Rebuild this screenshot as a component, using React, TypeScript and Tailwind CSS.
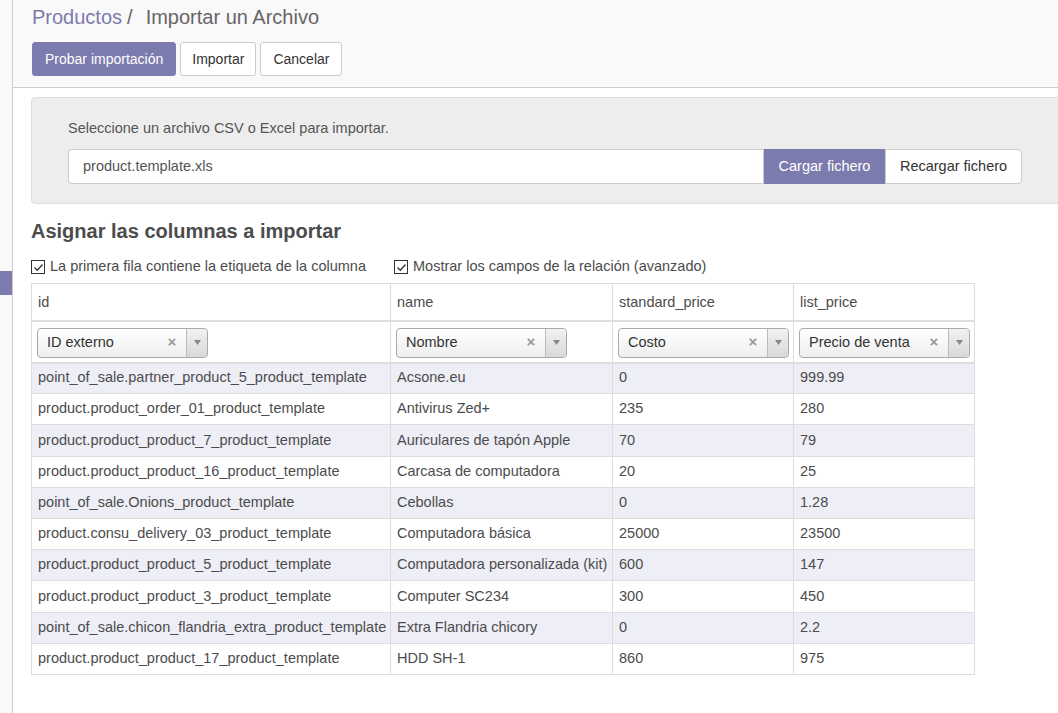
const rows = [
  ["point_of_sale.partner_product_5_product_template", "Acsone.eu", "0", "999.99"],
  ["product.product_order_01_product_template", "Antivirus Zed+", "235", "280"],
  ["product.product_product_7_product_template", "Auriculares de tapón Apple", "70", "79"],
  ["product.product_product_16_product_template", "Carcasa de computadora", "20", "25"],
  ["point_of_sale.Onions_product_template", "Cebollas", "0", "1.28"],
  ["product.consu_delivery_03_product_template", "Computadora básica", "25000", "23500"],
  ["product.product_product_5_product_template", "Computadora personalizada (kit)", "600", "147"],
  ["product.product_product_3_product_template", "Computer SC234", "300", "450"],
  ["point_of_sale.chicon_flandria_extra_product_template", "Extra Flandria chicory", "0", "2.2"],
  ["product.product_product_17_product_template", "HDD SH-1", "860", "975"],
];

const columns = [
  { name: "id", field: "ID externo", width: "w-[359px]" },
  { name: "name", field: "Nombre", width: "w-[222px]" },
  { name: "standard_price", field: "Costo", width: "w-[181px]" },
  { name: "list_price", field: "Precio de venta", width: "w-[181px]" },
];

function Checkbox() {
  return (
    <span className="w-[14px] h-[14px] border border-[#333] bg-white flex items-center justify-center shrink-0">
      <svg width="11" height="11" viewBox="0 0 11 11">
        <path d="M1.5 5.5 L4.3 8.3 L9.5 2.5" fill="none" stroke="#333" strokeWidth="1.3" />
      </svg>
    </span>
  );
}

function FieldSelect({ label }: { label: string }) {
  return (
    <div className="w-[171px] h-[30px] flex items-stretch rounded-[4px] border border-[#aaa] bg-gradient-to-b from-white to-[#eee] text-[#333]">
      <span className="flex-1 pl-[9px] flex items-center truncate">{label}</span>
      <span className="w-[28px] flex items-center justify-center text-[#999] text-[15px] font-bold">×</span>
      <span className="w-[21px] border-l border-[#bbb] flex items-center justify-center bg-gradient-to-b from-[#f2f2f2] to-[#d8d8d8] rounded-r-[4px]">
        <svg width="7" height="5" viewBox="0 0 7 5">
          <path d="M0 0 L7 0 L3.5 5 Z" fill="#888" />
        </svg>
      </span>
    </div>
  );
}

export default function App() {
  return (
    <div className="flex w-[1058px] h-[713px] overflow-hidden bg-white text-[14.5px] text-[#4c4c4c] font-['Liberation_Sans',Arial,sans-serif]">
      {/* Sidebar */}
      <div className="w-[13px] shrink-0 bg-[#f9f9f9] border-r border-[#ccc] pt-[271px]">
        <div className="h-[24px] bg-[#7c7bad]" />
      </div>

      <div className="flex-1 min-w-0 overflow-hidden">
        {/* Control panel */}
        <div className="h-[88px] bg-[#f9f9f9] border-b border-[#ccc] pl-[19px] pt-[5px]">
          <div className="text-[20px] leading-[24px] flex">
            <span className="text-[#7c7bad]">Productos</span>
            <span className="text-[#666] ml-[5px]">/</span>
            <span className="text-[#666] ml-[13px]">Importar un Archivo</span>
          </div>
          <div className="flex gap-[4px] mt-[13px] text-[14px]">
            <button className="h-[34px] px-[12px] rounded-[3px] bg-[#7c7bad] border border-[#7c7bad] text-white">Probar importación</button>
            <button className="h-[34px] px-[11px] rounded-[3px] bg-white border border-[#ccc] text-[#333]">Importar</button>
            <button className="h-[34px] px-[12px] rounded-[3px] bg-white border border-[#ccc] text-[#333]">Cancelar</button>
          </div>
        </div>

        <div className="pl-[18px] pt-[9px]">
          {/* File panel */}
          <div className="w-[1060px] h-[107px] bg-[#eeeded] border border-[#ddd] rounded-[4px] pl-[36px] pt-[20px]">
            <div className="text-[#555] leading-[20px]">Seleccione un archivo CSV o Excel para importar.</div>
            <div className="flex mt-[11px]">
              <div className="w-[696px] h-[35px] bg-white border border-[#ccc] rounded-l-[4px] pl-[14px] flex items-center text-[#555]">product.template.xls</div>
              <button className="h-[35px] w-[121px] bg-[#7c7bad] text-white">Cargar fichero</button>
              <button className="h-[35px] w-[137px] bg-white border border-[#ccc] rounded-r-[4px] text-[#333]">Recargar fichero</button>
            </div>
          </div>

          <h2 className="mt-[14px] text-[20px] font-bold leading-[26px] text-[#4c4c4c]">Asignar las columnas a importar</h2>

          <div className="flex mt-[13px] h-[20px] items-center">
            <label className="flex items-center gap-[5px] w-[363px]">
              <Checkbox />
              <span>La primera fila contiene la etiqueta de la columna</span>
            </label>
            <label className="flex items-center gap-[5px]">
              <Checkbox />
              <span>Mostrar los campos de la relación (avanzado)</span>
            </label>
          </div>

          {/* Table */}
          <table className="mt-[6px] border-collapse table-fixed w-[943px]">
            <thead>
              <tr className="h-[37px]">
                {columns.map((c) => (
                  <th key={c.name} className={`${c.width} border border-[#ddd] border-b-2 px-[6px] pt-[3px] text-left font-normal`}>{c.name}</th>
                ))}
              </tr>
              <tr className="h-[42px]">
                {columns.map((c) => (
                  <th key={c.name} className="border border-[#ddd] border-b-2 px-[5px] pt-[2px] text-left font-normal">
                    <FieldSelect label={c.field} />
                  </th>
                ))}
              </tr>
            </thead>
            <tbody>
              {rows.map((r, i) => (
                <tr key={i} className={`h-[31.2px] ${i % 2 === 0 ? "bg-[#eeeef6]" : "bg-white"}`}>
                  {r.map((v, j) => (
                    <td key={j} className="border border-[#ddd] px-[6px] whitespace-nowrap">{v}</td>
                  ))}
                </tr>
              ))}
            </tbody>
          </table>
        </div>
      </div>
    </div>
  );
}
